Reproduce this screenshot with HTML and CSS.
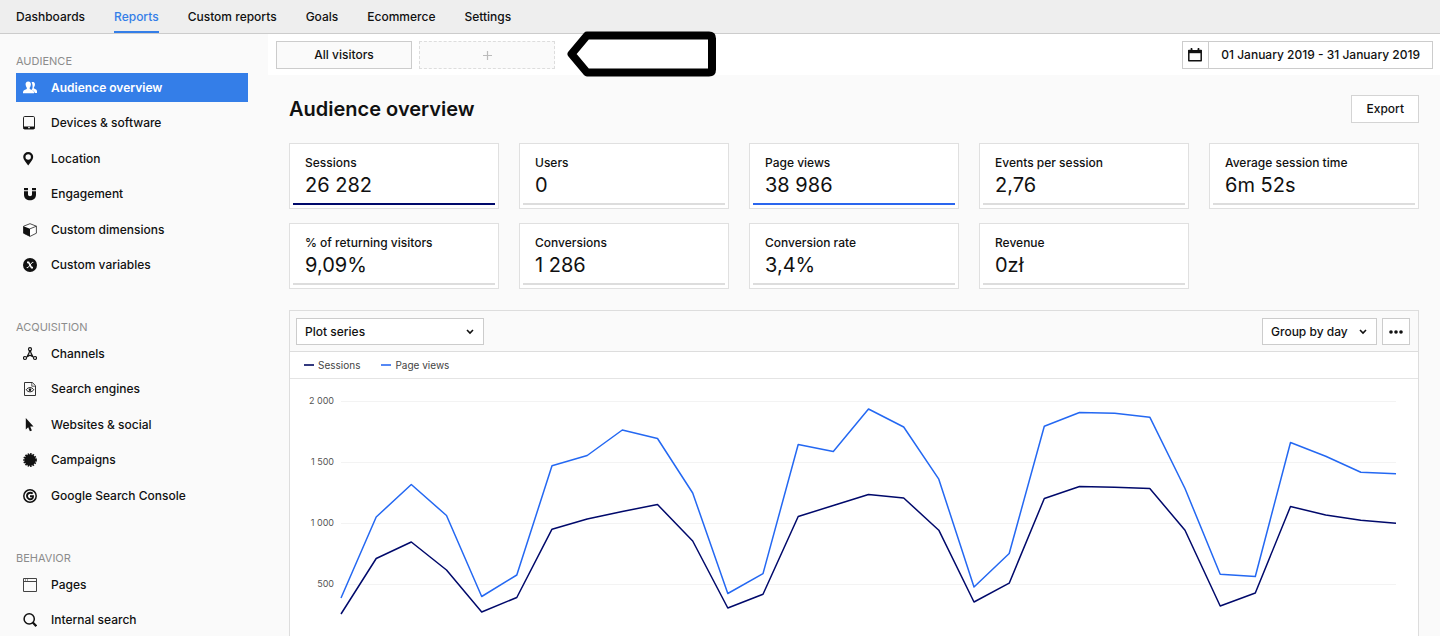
FILE: index.html
```html
<!DOCTYPE html>
<html lang="en">
<head>
<meta charset="utf-8">
<meta name="viewport" content="width=device-width, initial-scale=1">
<title>Audience overview</title>
<link rel="stylesheet" href="styles.css">
</head>
<body>
<div class="app">
  <header class="topbar">
    <nav class="topnav" aria-label="Main">
      <a class="topnav-link" href="#">Dashboards</a>
      <a class="topnav-link is-active" href="#" aria-current="page">Reports</a>
      <a class="topnav-link" href="#">Custom reports</a>
      <a class="topnav-link" href="#">Goals</a>
      <a class="topnav-link" href="#">Ecommerce</a>
      <a class="topnav-link" href="#">Settings</a>
    </nav>
  </header>

  <div class="body">
    <aside class="sidebar">
      <section class="side-group">
        <h2 class="side-title">AUDIENCE</h2>
        <ul class="side-list">
          <li><a class="side-link is-active" href="#">
            <svg class="icon" viewBox="0 0 14 14" aria-hidden="true"><path fill="currentColor" d="M8.6 1.6c1-.9 3-.6 3.300 1.200.2 1.400-.2 2.700-1 3.500v1c.8.700 2.700.9 3.100 2.700v2h-2.300c-.2-1.900-1.500-2.500-3-3.200.900-1.500 1-2.800.800-4.300-.1-1.200-.4-2-.9-2.900z"/><path fill="currentColor" d="M5.200.4c2 0 2.900 1.300 2.700 3.200-.1 1.400-.5 2.400-1.200 3.100v1.300c1.300.8 4 1 4.300 3v1.200H0V11c.2-1.900 2.500-2.200 3.800-3V6.700c-.7-.7-1.100-1.700-1.200-3.100C2.400 1.700 3.300.4 5.200.4z"/></svg>
            Audience overview</a></li>
          <li><a class="side-link" href="#">
            <svg class="icon" viewBox="0 0 14 14" aria-hidden="true"><rect x=".5" y=".5" width="11" height="12.500" rx="1.200" fill="none" stroke="#222"/><path d="M.5 10.500h11V13H.5z" fill="#111"/><path d="M5 11.700h2" stroke="#fafafa"/></svg>
            Devices &amp; software</a></li>
          <li><a class="side-link" href="#">
            <svg class="icon" viewBox="0 0 14 14" aria-hidden="true"><path fill="#111" fill-rule="evenodd" d="M5.200 0a5 5 0 0 1 5 5c0 2.500-2.800 5.500-5 8.500C3 10.500.2 7.500.2 5a5 5 0 0 1 5-5zm0 2.300a2.700 2.700 0 1 0 0 5.400 2.700 2.700 0 0 0 0-5.400z"/></svg>
            Location</a></li>
          <li><a class="side-link" href="#">
            <svg class="icon" viewBox="0 0 14 14" aria-hidden="true"><path fill="#111" d="M1 1h4v2.300H1zM9 1h4v2.300H9zM1 4.200h4v3.300c0 2.200 4 2.200 4 0V4.200h4v3.500c0 7.400-12 7.400-12 0z"/></svg>
            Engagement</a></li>
          <li><a class="side-link" href="#">
            <svg class="icon" viewBox="0 0 14 14" aria-hidden="true"><path d="M7 .7l6.400 2.500v7L7 13.400l-6.400-3.200v-7z" fill="#fff" stroke="#222" stroke-width=".8" stroke-linejoin="round"/><path d="M.4 3.200L7 5.800v7.800L.4 10.300z" fill="#111"/><path d="M7 5.800l6.400-2.600" stroke="#222" stroke-width=".8"/></svg>
            Custom dimensions</a></li>
          <li><a class="side-link" href="#">
            <svg class="icon" viewBox="0 0 14 14" aria-hidden="true"><circle cx="7" cy="7" r="7" fill="#111"/><path d="M4 4.400h1.600l2.900 5.200H10" fill="none" stroke="#fafafa" stroke-width="1.600"/><path d="M10.300 4.400H9.200L5 9.600H3.700" fill="none" stroke="#fafafa"/></svg>
            Custom variables</a></li>
        </ul>
      </section>

      <section class="side-group">
        <h2 class="side-title">ACQUISITION</h2>
        <ul class="side-list">
          <li><a class="side-link" href="#">
            <svg class="icon" viewBox="0 0 14 14" aria-hidden="true"><g fill="none" stroke="#111" stroke-width="1.200"><circle cx="7" cy="2.200" r="1.500"/><circle cx="2" cy="11" r="1.500"/><circle cx="12" cy="11" r="1.500"/><path d="M3.300 10.200L7 8.200l3.700 2M6.500 3.700C6.500 6 5.500 7 4.300 9.200M7.500 3.700C7.500 6 8.500 7 9.700 9.200"/></g></svg>
            Channels</a></li>
          <li><a class="side-link" href="#">
            <svg class="icon" viewBox="0 0 14 14" aria-hidden="true"><path d="M1.500.5h7.800l3.200 3.200v9.800h-11z" fill="none" stroke="#333"/><path d="M8.800.5v3.700h3.700" fill="none" stroke="#333" stroke-width=".8"/><path d="M3.200 7.800C5 4.900 9 4.900 10.800 7.800 9 10.500 5 10.500 3.200 7.800z" fill="none" stroke="#222"/><circle cx="7" cy="7.700" r="1.300" fill="#111"/></svg>
            Search engines</a></li>
          <li><a class="side-link" href="#">
            <svg class="icon" viewBox="0 0 14 14" aria-hidden="true"><path fill="#111" d="M2.800 0v11.500l2.400-2.200 1.700 4 2-.8-1.700-3.900h3.300z"/></svg>
            Websites &amp; social</a></li>
          <li><a class="side-link" href="#">
            <svg class="icon" viewBox="0 0 14 14" aria-hidden="true"><circle cx="7" cy="7" r="5.700" fill="#111"/><circle cx="7" cy="7" r="5.900" fill="none" stroke="#111" stroke-width="2" stroke-dasharray="1.500 .974"/></svg>
            Campaigns</a></li>
          <li><a class="side-link" href="#">
            <svg class="icon" viewBox="0 0 14 14" aria-hidden="true"><circle cx="7" cy="7" r="6.200" fill="none" stroke="#111" stroke-width="1.500"/><path d="M9.700 4.700C7.900 2.900 4 3.800 4 7s3.700 4.200 5.400 2.400C10 8.800 10 8 10 7.300H7" fill="none" stroke="#111" stroke-width="1.900"/></svg>
            Google Search Console</a></li>
        </ul>
      </section>

      <section class="side-group">
        <h2 class="side-title">BEHAVIOR</h2>
        <ul class="side-list">
          <li><a class="side-link" href="#">
            <svg class="icon" viewBox="0 0 14 14" aria-hidden="true"><path d="M.5.500h13v13H.5zM.5 3.500h13" fill="none" stroke="#444"/><path d="M2 2h1M4 2h1" stroke="#444"/></svg>
            Pages</a></li>
          <li><a class="side-link" href="#">
            <svg class="icon" viewBox="0 0 14 14" aria-hidden="true"><circle cx="6.200" cy="5.900" r="5.100" fill="none" stroke="#111" stroke-width="1.500"/><path d="M9.800 9.500l3.500 3.700" stroke="#111" stroke-width="2.200"/></svg>
            Internal search</a></li>
        </ul>
      </section>
    </aside>

    <main class="main">
      <div class="toolbar">
        <button class="segment" type="button">All visitors</button>
        <button class="segment segment-add" type="button" aria-label="Add segment">
          <svg class="plus" viewBox="0 0 9 9" aria-hidden="true"><path d="M4.500 0v9M0 4.500h9" stroke="#bbb" stroke-width="1.200"/></svg>
        </button>
        <button class="daterange" type="button">
          <span class="daterange-icon"><svg class="icon" viewBox="0 0 14 14" aria-hidden="true"><path d="M.8 2.500h12.400v10.200H.8z" fill="none" stroke="#111" stroke-width="1.500" stroke-linejoin="round"/><path d="M.5 2h13v3.200H.5z" fill="#111"/><path d="M3.500 0v3M10.500 0v3" stroke="#111" stroke-width="1.600"/><path d="M5 1.500h4" stroke="#fff"/></svg></span>
          <span class="daterange-text">01 January 2019 - 31 January 2019</span>
        </button>
        <svg class="callout" viewBox="0 0 150 46" aria-hidden="true"><path d="M20 4.500h122q3 0 3 3v31q0 3-3 3H20L4.500 23z" fill="#fff" stroke="#000" stroke-width="8" stroke-linejoin="round"/></svg>
      </div>

      <div class="content">
        <div class="title-row">
          <h1 class="title">Audience overview</h1>
          <button class="export" type="button">Export</button>
        </div>

        <div class="cards">
          <article class="card card-navy"><h2 class="card-label">Sessions</h2><p class="card-value">26 282</p></article>
          <article class="card"><h2 class="card-label">Users</h2><p class="card-value">0</p></article>
          <article class="card card-blue"><h2 class="card-label">Page views</h2><p class="card-value">38 986</p></article>
          <article class="card"><h2 class="card-label">Events per session</h2><p class="card-value">2,76</p></article>
          <article class="card"><h2 class="card-label">Average session time</h2><p class="card-value">6m 52s</p></article>
          <article class="card"><h2 class="card-label">% of returning visitors</h2><p class="card-value">9,09%</p></article>
          <article class="card"><h2 class="card-label">Conversions</h2><p class="card-value">1 286</p></article>
          <article class="card"><h2 class="card-label">Conversion rate</h2><p class="card-value">3,4%</p></article>
          <article class="card"><h2 class="card-label">Revenue</h2><p class="card-value">0zł</p></article>
        </div>

        <section class="panel">
          <div class="panel-head">
            <span class="select-wrap">
              <select class="select select-series" aria-label="Plot series"><option>Plot series</option></select>
              <svg class="caret" viewBox="0 0 8 6" aria-hidden="true"><path d="M1 1l3 3 3-3" fill="none" stroke="#111" stroke-width="1.600"/></svg>
            </span>
            <span class="select-wrap push">
              <select class="select select-group" aria-label="Group by"><option>Group by day</option></select>
              <svg class="caret" viewBox="0 0 8 6" aria-hidden="true"><path d="M1 1l3 3 3-3" fill="none" stroke="#111" stroke-width="1.600"/></svg>
            </span>
            <button class="more" type="button" aria-label="More options">
              <svg class="dots" viewBox="0 0 14 4" aria-hidden="true"><circle cx="2" cy="2" r="1.800"/><circle cx="7" cy="2" r="1.800"/><circle cx="12" cy="2" r="1.800"/></svg>
            </button>
          </div>
          <ul class="legend">
            <li class="legend-item legend-navy">Sessions</li>
            <li class="legend-item legend-blue">Page views</li>
          </ul>
          <div class="chart">
            <div class="axis"><span>2 000</span><span>1 500</span><span>1 000</span><span>500</span></div>
            <svg class="plot" viewBox="0 0 1055 257" preserveAspectRatio="none" role="img" aria-label="Sessions and page views by day">
              <path class="grid" d="M0 22.500H1055M0 83.500H1055M0 144.500H1055M0 205.500H1055"/>
              <polyline class="line line-blue" points="0,219 35.200,138 70.300,105.500 105.500,136.500 140.700,217.500 175.800,196 211,86.800 246.200,76.500 281.300,51 316.500,59.500 351.700,114 386.800,214.500 422,194.600 457.200,65.500 492.300,72.500 527.500,30 562.700,48 597.800,100.200 633,208 668.200,174.500 703.300,47.200 738.500,33.500 773.700,34.300 808.800,38.200 844,109.500 879.200,195.200 914.300,197.500 949.500,63.500 984.700,77.200 1019.800,93.200 1055,94.800"/>
              <polyline class="line line-navy" points="0,235 35.200,179.500 70.300,163 105.500,191 140.700,233 175.800,218.500 211,150.200 246.200,140 281.300,132.500 316.500,125.500 351.700,162 386.800,229 422,215.200 457.200,137.500 492.300,126.500 527.500,115.500 562.700,119 597.800,151.200 633,223 668.200,204.200 703.300,119.500 738.500,107.500 773.700,108.200 808.800,109.500 844,151.200 879.200,227 914.300,214 949.500,127.500 984.700,136 1019.800,141.200 1055,144.200"/>
            </svg>
          </div>
        </section>
      </div>
    </main>
  </div>
</div>
</body>
</html>
```
FILE: styles.css
```css
* { box-sizing: border-box; }

body {
  margin: 0;
  background: #fafafa;
  color: #111;
  font: 500 12px/16px Inter, "Liberation Sans", sans-serif;
}

h1, h2, p, ul { margin: 0; padding: 0; font: inherit; }
ul { list-style: none; }
a { color: inherit; text-decoration: none; }
button, select { font: inherit; color: inherit; border-radius: 0; cursor: pointer; }
svg { display: block; }

.icon { flex: none; width: 14px; height: 14px; }

.app { display: flex; flex-direction: column; min-height: 100vh; }

.topbar { background: #eee; border-bottom: 1px solid #ccc; }
.topnav { display: flex; gap: 29px; padding: 0 16px; }
.topnav-link { padding: 9px 0 6px; border-bottom: 2px solid transparent; }
.topnav-link.is-active { color: #347ee8; border-bottom-color: #347ee8; }

.body { display: flex; flex: 1; }

.sidebar { flex: none; width: 268px; padding: 19px 20px 0 16px; }
.side-group { margin-bottom: 40px; }
.side-group:last-child { margin-bottom: 0; }
.side-title { margin-bottom: 4px; color: #8c8c8c; font-size: 11px; font-weight: 400; }
.side-list { display: flex; flex-direction: column; gap: 6px; }
.side-list li:nth-child(even):not(:last-child) { margin-bottom: 1px; }
.side-link { display: flex; align-items: center; gap: 14px; height: 29px; padding-left: 7px; }
.side-link.is-active { background: #347ee8; color: #fff; font-weight: 600; }

.main { display: flex; flex: 1; flex-direction: column; min-width: 0; }

.toolbar { position: relative; display: flex; gap: 7px; padding: 7px 7px 6px 8px; background: #fff; }
.segment { display: flex; align-items: center; justify-content: center; width: 136px; height: 28px; padding: 0; background: #fafafa; border: 1px solid #ccc; }
.segment-add { border: 1px dashed #ddd; }
.plus { width: 9px; height: 9px; }
.daterange { display: flex; align-items: stretch; height: 28px; margin-left: auto; padding: 0; background: #fff; border: 1px solid #ccc; }
.daterange-icon { display: flex; align-items: center; padding: 0 6px 0 5px; border-right: 1px solid #ccc; }
.daterange-text { display: flex; align-items: center; padding: 0 12px; }
.callout { position: absolute; top: -3px; left: 299px; width: 150px; height: 46px; }

.content { display: flex; flex: 1; flex-direction: column; padding: 20px 21px 0; }
.title-row { display: flex; align-items: center; justify-content: space-between; margin-bottom: 20px; }
.title { font-size: 20px; font-weight: 600; line-height: 28px; }
.export { height: 28px; padding: 0 14px; background: #fff; border: 1px solid #d4d4d4; }

.cards { display: grid; grid-template-columns: repeat(5, 1fr); gap: 14px 20px; margin-bottom: 21px; }
.card { padding: 11px 3px 3px; background: #fff; border: 1px solid #e0e0e0; }
.card-label { padding: 0 12px; }
.card-value { padding: 0 12px 4px; border-bottom: 2px solid #ddd; font-size: 20px; font-weight: 400; line-height: 28px; }
.card-navy .card-value { border-bottom-color: #00096b; }
.card-blue .card-value { border-bottom-color: #2b66ee; }

.panel { display: flex; flex: 1; flex-direction: column; background: #fff; border: 1px solid #ddd; border-bottom: 0; }
.panel-head { display: flex; gap: 5px; padding: 7px 8px 6px 6px; background: #fafafa; border-bottom: 1px solid #ddd; }
.select-wrap { position: relative; display: flex; }
.select { appearance: none; height: 27px; padding: 0 28px 0 8px; background: #fff; border: 1px solid #ccc; }
.select-series { width: 188px; }
.push { margin-left: auto; }
.caret { position: absolute; top: 11px; right: 10px; width: 8px; height: 6px; pointer-events: none; }
.more { display: flex; align-items: center; justify-content: center; width: 28px; height: 27px; padding: 0; background: #fff; border: 1px solid #ccc; }
.dots { width: 14px; height: 4px; fill: #111; }

.legend { display: flex; gap: 21px; padding: 5px 14px; border-bottom: 1px solid #e4e4e4; color: #444; font-size: 10px; font-weight: 400; }
.legend-item { display: flex; align-items: center; gap: 4px; }
.legend-item::before { content: ""; width: 10px; height: 2px; background: #33397f; }
.legend-blue::before { background: #5588f5; }

.chart { display: flex; gap: 7px; padding-right: 22px; }
.axis { display: flex; flex: none; flex-direction: column; gap: 41px; width: 44px; padding-top: 12px; color: #555; font-size: 9px; font-weight: 400; line-height: 20px; text-align: right; }
.plot { flex: 1; min-width: 0; height: 257px; overflow: visible; }
.grid, .line { fill: none; vector-effect: non-scaling-stroke; }
.grid { stroke: #f3f3f3; stroke-width: 1px; }
.line { stroke-width: 1.5px; stroke-linejoin: round; }
.line-blue { stroke: #2468f2; }
.line-navy { stroke: #00096b; }
```
